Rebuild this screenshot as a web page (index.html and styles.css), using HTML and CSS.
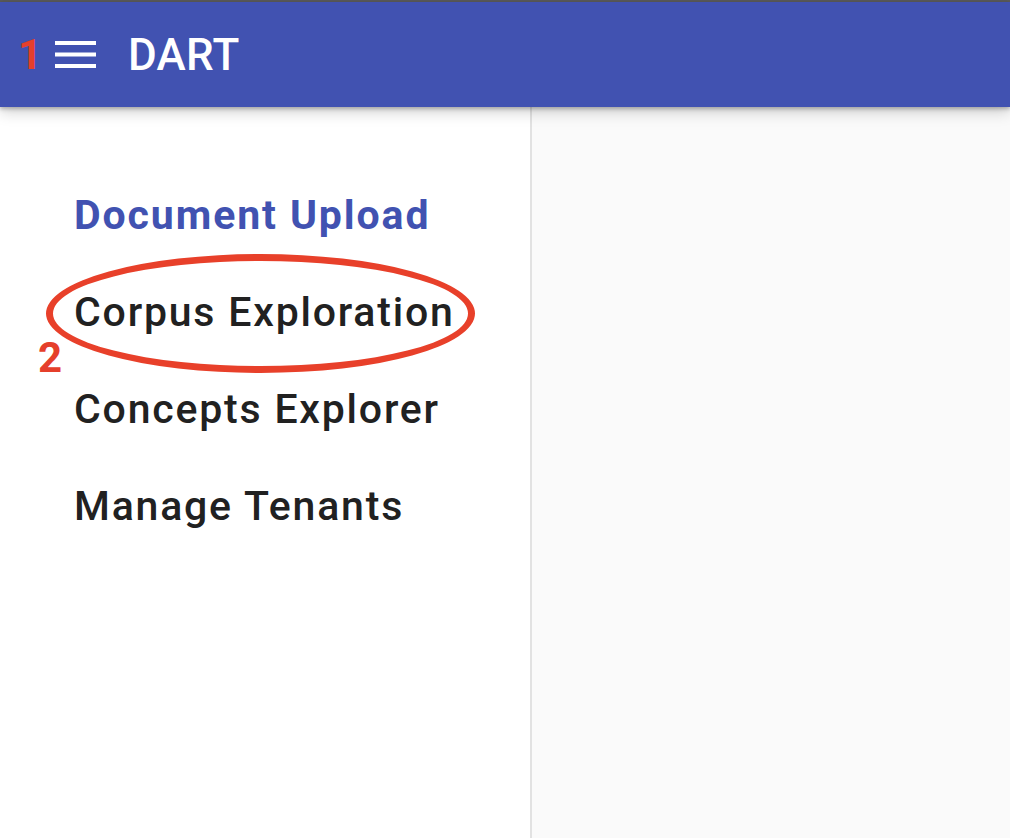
FILE: index.html
```html
<!DOCTYPE html>
<html lang="en">
<head>
<meta charset="utf-8">
<title>DART</title>
<link rel="stylesheet" href="styles.css">
</head>
<body>
<div class="app">
  <header class="topbar">
    <span class="mark mark-1">1</span>
    <button class="menu-btn" aria-label="Menu">
      <svg width="41" height="27" viewBox="0 0 41 27" aria-hidden="true">
        <rect x="0" y="0" width="41" height="4" fill="#fff"/>
        <rect x="0" y="11.5" width="41" height="4" fill="#fff"/>
        <rect x="0" y="23" width="41" height="4" fill="#fff"/>
      </svg>
    </button>
    <h1 class="title">DART</h1>
  </header>
  <div class="main">
    <nav class="sidebar">
      <ul class="nav">
        <li class="nav-item active">Document Upload</li>
        <li class="nav-item highlighted">Corpus Exploration
          <span class="circle"></span>
          <span class="mark mark-2">2</span>
        </li>
        <li class="nav-item">Concepts Explorer</li>
        <li class="nav-item">Manage Tenants</li>
      </ul>
    </nav>
    <section class="content"></section>
  </div>
</div>
</body>
</html>
```

FILE: styles.css
```css
* { box-sizing: border-box; }
html, body { margin: 0; padding: 0; height: 100%; }
body {
  font-family: Roboto, "Liberation Sans", Arial, sans-serif;
  background: #fafafa;
  overflow: hidden;
}
.app {
  display: flex;
  flex-direction: column;
  height: 100vh;
  border-top: 2px solid #5b5b5b;
}
.topbar {
  position: relative;
  z-index: 2;
  height: 105px;
  flex: none;
  display: flex;
  align-items: center;
  background: #4152b1;
  box-shadow: 0 2px 4px rgba(0,0,0,0.25), 0 5px 14px rgba(0,0,0,0.18);
  padding-left: 55px;
}
.menu-btn {
  border: 0;
  background: none;
  padding: 0;
  margin: 0;
  display: flex;
  width: 41px;
  height: 27px;
}
.title {
  margin: 0 0 0 32px;
  color: #fff;
  font-size: 44px;
  font-weight: 500;
  letter-spacing: 0.3px;
}
.mark {
  position: absolute;
  color: #e53f2b;
  font-family: Roboto, "Liberation Sans", sans-serif;
  font-weight: 700;
  font-size: 42px;
  line-height: 1;
}
.mark-1 { left: 18px; top: 32px; }
.main {
  flex: 1;
  display: flex;
  min-height: 0;
}
.sidebar {
  width: 532px;
  flex: none;
  background: #fff;
  border-right: 2px solid #e2e2e2;
}
.nav {
  list-style: none;
  margin: 0;
  padding: 60px 0 0 74px;
}
.nav-item {
  position: relative;
  font-size: 41px;
  line-height: 97px;
  font-weight: 500;
  letter-spacing: 1.8px;
  color: #212121;
  white-space: nowrap;
}
.nav-item.active {
  color: #4152b1;
  font-weight: 700;
  letter-spacing: 1.9px;
}
.circle {
  position: absolute;
  left: -28px;
  top: -10px;
  width: 429px;
  height: 119px;
  border: 7px solid #e8402a;
  border-radius: 50%;
}
.mark-2 {
  left: -36px;
  top: 73px;
  letter-spacing: 0;
}
.content {
  flex: 1;
  background: #fafafa;
}
```
